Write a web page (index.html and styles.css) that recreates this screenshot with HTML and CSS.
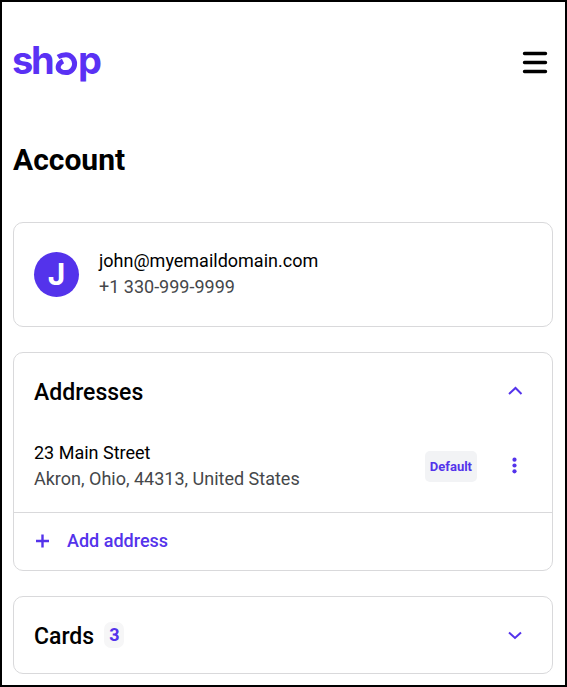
FILE: index.html
```html
<!DOCTYPE html>
<html lang="en">
<head>
<meta charset="utf-8">
<meta name="viewport" content="width=device-width, initial-scale=1">
<title>Account</title>
<link rel="stylesheet" href="styles.css">
</head>
<body>
<header class="header">
  <a class="logo" href="#" aria-label="shop">
    <svg width="90" height="40" viewBox="0 0 90 40" aria-hidden="true">
      <text class="logo-text" y="31" x="-1 18 65">shp</text>
      <path class="logo-swirl" d="M45 14Q48.500 11.800 53 11.800A8.600 8.900 0 0 1 53 29.600C48 29.600 44.800 27 45.200 23.500Q45.800 20 50 18"/>
    </svg>
  </a>
  <button class="icon-button" type="button" aria-label="Menu">
    <svg width="26" height="24" viewBox="0 0 26 24"><path class="menu-lines" d="M2.500 2.500h21M2.500 11.500h21M2.500 20.500h21"/></svg>
  </button>
</header>
<main class="main">
  <h1 class="title">Account</h1>
  <section class="card profile">
    <span class="avatar">J</span>
    <div class="lines">
      <p>john@myemaildomain.com</p>
      <p class="muted">+1 330-999-9999</p>
    </div>
  </section>
  <section class="card">
    <div class="card-head">
      <h2>Addresses</h2>
      <button class="icon-button" type="button" aria-label="Collapse addresses">
        <svg width="16" height="16" viewBox="0 0 16 16"><path class="line" d="M2 11l6.500-6 6 6"/></svg>
      </button>
    </div>
    <div class="address">
      <div class="lines">
        <p>23 Main Street</p>
        <p class="muted">Akron, Ohio, 44313, United States</p>
      </div>
      <span class="tag">Default</span>
      <button class="icon-button" type="button" aria-label="Address options">
        <svg width="16" height="16" viewBox="0 0 16 16"><g class="dots"><circle cx="7.500" cy="1.700" r="2.100"/><circle cx="7.500" cy="7.500" r="2.100"/><circle cx="7.500" cy="13.300" r="2.100"/></g></svg>
      </button>
    </div>
    <button class="add" type="button">
      <svg width="16" height="16" viewBox="0 0 16 16" aria-hidden="true"><path class="line plus" d="M2 8h13M8.500 1.500v13"/></svg>
      Add address
    </button>
  </section>
  <section class="card">
    <div class="card-head">
      <h2>Cards</h2>
      <span class="count">3</span>
      <button class="icon-button" type="button" aria-label="Expand cards">
        <svg width="16" height="16" viewBox="0 0 16 16"><path class="line" d="M2 5.500l6 5.500 6-5.500"/></svg>
      </button>
    </div>
  </section>
</main>
</body>
</html>
```
FILE: styles.css
```css
* {
  box-sizing: border-box;
}

:root {
  --accent: #5433eb;
  --line: #d9d9db;
}

body {
  min-height: 100vh;
  margin: 0;
  padding: 0 12px 11px 11px;
  border: 2px solid #000;
  background: #fff;
  color: #000;
  font: 18px/26px Roboto, "Liberation Sans", sans-serif;
}

h1, h2, p {
  margin: 0;
}

button {
  padding: 0;
  border: 0;
  background: none;
  font: inherit;
  cursor: pointer;
}

svg {
  display: block;
  overflow: visible;
  fill: none;
}

.header {
  display: flex;
  align-items: center;
  justify-content: space-between;
  padding: 41px 5px 41px 0;
}

.logo-text {
  fill: #5a31f4;
  font: 700 38px Inter, sans-serif;
}

.logo-swirl {
  stroke: #5a31f4;
  stroke-width: 5;
}

.menu-lines {
  stroke: #000;
  stroke-width: 3.4;
  stroke-linecap: round;
}

.main {
  display: flex;
  flex-direction: column;
  gap: 25px;
}

.title {
  padding: 16px 0 17px;
  font-size: 30px;
  font-weight: 700;
  line-height: 40px;
}

.card {
  border: 1px solid var(--line);
  border-radius: 10px;
}

.profile {
  display: flex;
  align-items: center;
  gap: 20px;
  padding: 25px 20px 26px;
}

.avatar {
  display: grid;
  place-items: center;
  width: 45px;
  height: 45px;
  border-radius: 50%;
  background: var(--accent);
  color: #fff;
  font: 700 30px/45px Inter, sans-serif;
}

.muted {
  color: #45474a;
}

.card-head {
  display: flex;
  align-items: center;
  gap: 10px;
  padding: 22px 29px 22px 20px;
}

.card-head h2 {
  padding-top: 4px;
  font-size: 23px;
  font-weight: 500;
  line-height: 28px;
}

.card-head .icon-button {
  margin-left: auto;
}

.count {
  padding: 0 5px;
  border-radius: 7px;
  background: #f6f6f7;
  color: var(--accent);
  font-weight: 700;
}

.line {
  stroke: var(--accent);
  stroke-width: 2;
}

.plus {
  stroke-width: 2.4;
}

.address {
  display: flex;
  align-items: center;
  padding: 11px 29px 20px 20px;
}

.address .lines {
  flex: 1;
}

.tag {
  margin-right: 30px;
  padding: 0 5px;
  border-radius: 5px;
  background: #f2f3f5;
  color: var(--accent);
  font-size: 13px;
  font-weight: 700;
  line-height: 31px;
}

.dots {
  fill: var(--accent);
}

.add {
  display: flex;
  align-items: center;
  gap: 17px;
  width: 100%;
  padding: 15px 20px 16px;
  border-top: 1px solid var(--line);
  color: var(--accent);
  font-weight: 500;
}
```
